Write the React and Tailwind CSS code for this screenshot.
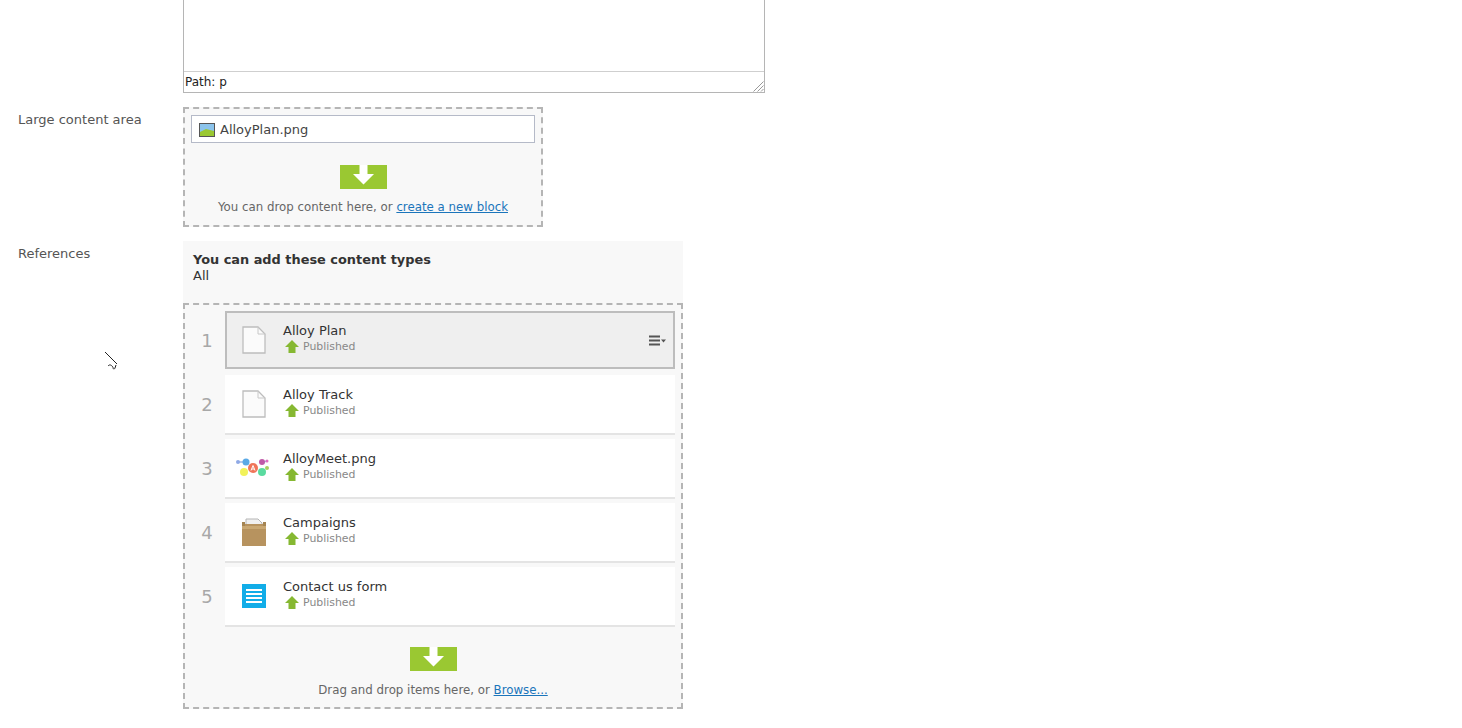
import React from "react";

const items = [
  { id: 1, name: "Alloy Plan", icon: "page", selected: true },
  { id: 2, name: "Alloy Track", icon: "page" },
  { id: 3, name: "AlloyMeet.png", icon: "meet" },
  { id: 4, name: "Campaigns", icon: "box" },
  { id: 5, name: "Contact us form", icon: "form" },
];

function DropArrow() {
  return (
    <svg width="47" height="24" viewBox="0 0 47 24" className="block">
      <rect width="47" height="24" fill="#9ac832" />
      <path d="M19.5 0h8v9h6.5l-10.500 10.500-10.500-10.500h6.500z" fill="#fff" />
    </svg>
  );
}

function PageIcon() {
  return (
    <svg width="24" height="28" viewBox="0 0 24 28">
      <path d="M1 1h15l7 7v19h-22z" fill="#fbfbfb" stroke="#bdbdbd" strokeWidth="1.300" />
      <path d="M16 1v7h7" fill="none" stroke="#c8c8c8" />
    </svg>
  );
}

function MeetIcon() {
  return (
    <svg width="36" height="24" viewBox="0 0 36 24">
      <path d="M2 6h10M26 6l6-1" stroke="#9fb8e8" strokeWidth="1.500" />
      <circle cx="2" cy="6" r="2" fill="#8fa9e6" />
      <circle cx="10" cy="6" r="3.500" fill="#5aa9e6" />
      <circle cx="26" cy="6" r="3" fill="#c05aa8" />
      <circle cx="31" cy="5" r="1.500" fill="#e06cc0" />
      <circle cx="17" cy="12" r="5" fill="#f0755a" />
      <circle cx="8" cy="16" r="4" fill="#f2f25a" />
      <circle cx="26" cy="16" r="4" fill="#5adba0" />
      <circle cx="31" cy="12" r="2" fill="#a8d060" />
      <path d="M15 14.500l2-5 2 5M16 13h2" stroke="#fff" strokeWidth="1" fill="none" />
    </svg>
  );
}

function BoxIcon() {
  return (
    <svg width="24" height="28" viewBox="0 0 24 28">
      <path d="M4 1h12l4 4v8h-16z" fill="#f0f0f0" stroke="#b5b5b5" />
      <rect x="0" y="6" width="24" height="22" fill="#b7935f" />
      <rect x="0" y="4" width="3" height="4" fill="#a58553" />
      <rect x="21" y="4" width="3" height="4" fill="#a58553" />
      <rect x="0" y="8" width="24" height="3" fill="#c9a873" />
    </svg>
  );
}

function FormIcon() {
  return (
    <svg width="24" height="24" viewBox="0 0 24 24">
      <rect width="24" height="24" fill="#12ade8" />
      <path d="M4 6h16M4 10h16M4 14h16M4 18h16" stroke="#fff" strokeWidth="2" />
    </svg>
  );
}

const icons = { page: PageIcon, meet: MeetIcon, box: BoxIcon, form: FormIcon };

function ItemRow({ item }) {
  const Icon = icons[item.icon];
  return (
    <div className="flex h-[64px] items-start">
      <div className="w-[40px] pt-[19px] pl-[4px] text-center text-[18px] leading-[22px] text-[#a8a8a8]">{item.id}</div>
      <div
        className={
          item.selected
            ? "flex h-[58px] w-[450px] items-center border-[2px] border-[#bdbdbd] bg-[#efefef]"
            : "flex h-[60px] w-[450px] items-center border-b-[2px] border-[#e4e4e4] bg-white px-[2px]"
        }
      >
        <div className="mr-[2px] flex w-[54px] shrink-0 items-center justify-center">
          <Icon />
        </div>
        <div className="min-w-0 flex-1 pb-[5px]">
          <div className="text-[13px] leading-[19px] text-[#333]">{item.name}</div>
          <div className="-mt-[2px] flex items-center text-[10.900px] leading-[14px] text-[#888]">
            <svg width="14" height="13" viewBox="0 0 14 13" className="mr-[4px] ml-[2px]">
              <path d="M7 0l7 7h-3.500v6h-7v-6h-3.500z" fill="#86b832" />
            </svg>
            <span className="pt-[2px]">Published</span>
          </div>
        </div>
        {item.selected && (
          <svg width="17" height="12" viewBox="0 0 17 12" className="mt-[1px] mr-[7px]">
            <path d="M0 1.500h11M0 5.500h11M0 9.500h11" stroke="#555" strokeWidth="2" />
            <path d="M12 4.500h5l-2.500 3z" fill="#555" />
          </svg>
        )}
      </div>
    </div>
  );
}

export default function App() {
  return (
    <div className="relative h-[728px] w-full overflow-hidden bg-white pl-[18px] font-['DejaVu_Sans',sans-serif] text-[13px] text-[#333]">
      {/* Editor bottom */}
      <div className="ml-[165px] flex h-[93px] w-[582px] flex-col border-x border-b border-[#b5b5b5]">
        <div className="flex-1 border-b border-[#cfcfcf]" />
        <div className="relative h-[20px] pl-[1px] text-[12px] leading-[21px] text-[#222]">
          Path: p
          <svg width="11" height="11" viewBox="0 0 11 11" className="absolute right-0 bottom-0">
            <path d="M10.500 0.500l-10 10M10.500 4.500l-6 6M10.500 8l-2.500 2.500" stroke="#999" fill="none" />
          </svg>
        </div>
      </div>

      {/* Large content area */}
      <div className="mt-[14px] flex">
        <div className="w-[165px] pt-[5px] leading-[16px] text-[#555]">Large content area</div>
        <div className="flex h-[120px] w-[360px] flex-col items-center border-[2px] border-dashed border-[#b5b5b5] bg-[#f8f8f8] px-[6px] pt-[6px]">
          <div className="flex h-[28px] w-full items-center border border-[#b5bac8] bg-white pt-[2px] pl-[7px] text-[#444]">
            <svg width="16" height="14" viewBox="0 0 16 14" className="mr-[5px]">
              <rect x="0.500" y="0.500" width="15" height="13" fill="#8cc4ec" stroke="#555" />
              <path d="M1 9l6-3 8 2v5h-14z" fill="#9ac832" />
            </svg>
            AlloyPlan.png
          </div>
          <div className="mt-[22px]">
            <DropArrow />
          </div>
          <div className="mt-[10px] text-[11.800px] leading-[16px] text-[#666]">
            You can drop content here, or <a href="#" className="text-[#1b75bb] underline">create a new block</a>
          </div>
        </div>
      </div>

      {/* References */}
      <div className="mt-[14px] flex">
        <div className="w-[165px] pt-[5px] leading-[16px] text-[#555]">References</div>
        <div className="w-[500px]">
          <div className="h-[62px] bg-[#f8f8f8] px-[10px] pt-[11px] leading-[16px]">
            <div className="text-[12.900px] font-bold">You can add these content types</div>
            <div>All</div>
          </div>
          <div className="h-[406px] border-[2px] border-dashed border-[#b5b5b5] bg-[#f8f8f8] pt-[6px]">
            {items.map((item) => (
              <ItemRow key={item.id} item={item} />
            ))}
            <div className="mt-[16px] flex flex-col items-center">
              <DropArrow />
              <div className="mt-[11px] text-[11.800px] leading-[16px] text-[#666]">
                Drag and drop items here, or <a href="#" className="text-[#1b75bb] underline">Browse...</a>
              </div>
            </div>
          </div>
        </div>
      </div>

      {/* Mouse cursor caught in the capture */}
      <svg width="14" height="20" viewBox="0 0 14 20" className="absolute top-[351px] left-[104px]">
        <path d="M1 1l12 12M4 15c2-2 3-1 5 1 0 2 1 3 2 1l1-3" stroke="#222" fill="none" />
      </svg>
    </div>
  );
}
